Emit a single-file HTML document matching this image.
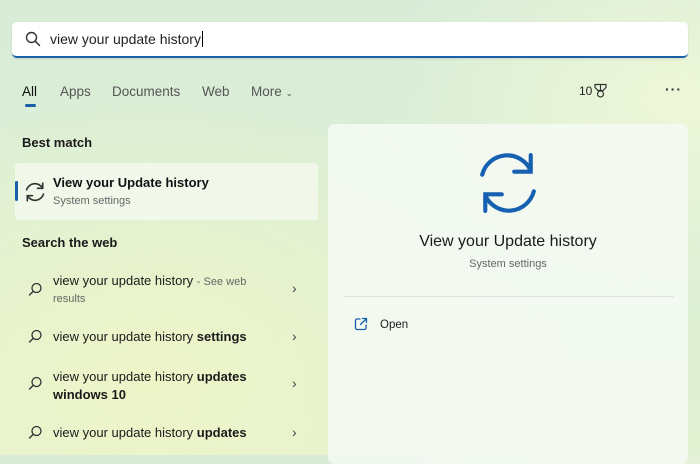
<!DOCTYPE html>
<html><head><meta charset="utf-8"><style>
*{margin:0;padding:0;box-sizing:border-box}
body{width:700px;height:455px;overflow:hidden;position:relative;font-family:"Segoe UI","Liberation Sans",sans-serif;color:#1a1a1a;
background:radial-gradient(ellipse 420px 300px at 150px 380px,#eef5c8 0%,rgba(238,245,200,0) 100%),radial-gradient(ellipse 300px 200px at 680px 100px,#eef7d8 0%,rgba(238,247,216,0) 100%),linear-gradient(180deg,#d8ecd8 0%,#dcefd6 50%,#e2f1d2 100%);}
.a{position:absolute;white-space:nowrap}
.search{left:12px;top:22px;width:676px;height:36px;background:#fff;border-radius:5px;border-bottom:2px solid #1a5fa8;box-shadow:0 1px 2px rgba(0,0,0,.1)}
.tab{top:84px;font-size:13.5px;color:#555}
.panel{left:328px;top:124px;width:360px;height:340px;background:rgba(246,250,244,.85);border-radius:7px}
.card{left:15px;top:163px;width:303px;height:57px;background:rgba(245,250,240,.8);border-radius:4px}
.h{font-size:13px;font-weight:bold}
.t{font-size:13px;color:#1a1a1a}
.s{font-size:11px;color:#666}
.chev{font-size:14px;color:#444}
</style></head><body>
<div class="a search"></div>
<svg class="a" style="left:25px;top:31px" width="16" height="16" viewBox="0 0 16 16"><circle cx="6.5" cy="6.5" r="5" fill="none" stroke="#333" stroke-width="1.4"/><path d="M10.2 10.2L14.5 14.5" stroke="#333" stroke-width="1.5" stroke-linecap="round"/></svg>
<div class="a" style="left:50px;top:31px;font-size:14px;color:#222">view your update history<span style="border-left:1px solid #000;margin-left:1px"></span></div>
<div class="a tab" style="left:22px;color:#111">All</div>
<div class="a" style="left:25px;top:104px;width:11px;height:3px;border-radius:2px;background:#1a5fa8"></div>
<div class="a tab" style="left:60px">Apps</div>
<div class="a tab" style="left:112px">Documents</div>
<div class="a tab" style="left:202px">Web</div>
<div class="a tab" style="left:251px">More <span style="font-size:9px">&#8964;</span></div>
<div class="a" style="left:579px;top:84px;font-size:12px;color:#222">10</div>
<svg class="a" style="left:593px;top:83px" width="15" height="16" viewBox="0 0 15 16"><path d="M2 1.5h11v3l-3 3h-5l-3-3z" fill="none" stroke="#333" stroke-width="1.2"/><path d="M7.5 1.5v6" stroke="#333" stroke-width="1.1"/><circle cx="7.5" cy="11" r="3" fill="none" stroke="#333" stroke-width="1.2"/></svg>
<div class="a" style="left:665px;top:81px;font-size:14px;color:#333;letter-spacing:1px;font-weight:bold">···</div>

<div class="a h" style="left:22px;top:135px">Best match</div>
<div class="a card"></div>
<div class="a" style="left:15px;top:181px;width:3px;height:20px;background:#1a5fa8;border-radius:2px"></div>
<svg class="a" style="left:24px;top:181px" width="22" height="22" viewBox="0 0 60 60"><path d="M7 24A24 24 0 0 1 51 20M51 6V20H37M53 36A24 24 0 0 1 9 40M9 54V40H23" fill="none" stroke="#333" stroke-width="4.5" stroke-linecap="round"/></svg>
<div class="a" style="left:53px;top:175px;font-size:13px;font-weight:600;color:#111">View your Update history</div>
<div class="a s" style="left:53px;top:195px">System settings</div>

<div class="a h" style="left:22px;top:235px">Search the web</div>
<div class="a t" style="left:53px;top:273px">view your update history <span class="s">- See web</span></div>
<div class="a s" style="left:53px;top:293px">results</div>
<div class="a t" style="left:53px;top:329px">view your update history <b>settings</b></div>
<div class="a t" style="left:53px;top:369px">view your update history <b>updates</b></div>
<div class="a t" style="left:53px;top:387px"><b>windows 10</b></div>
<div class="a t" style="left:53px;top:425px">view your update history <b>updates</b></div>
<svg class="a" style="left:28px;top:282px" width="15" height="15" viewBox="0 0 15 15"><circle cx="8.5" cy="6" r="4.5" fill="none" stroke="#333" stroke-width="1.3"/><path d="M5.3 9.2L1.5 13" stroke="#333" stroke-width="1.4" stroke-linecap="round"/></svg>
<svg class="a" style="left:28px;top:329px" width="15" height="15" viewBox="0 0 15 15"><circle cx="8.5" cy="6" r="4.5" fill="none" stroke="#333" stroke-width="1.3"/><path d="M5.3 9.2L1.5 13" stroke="#333" stroke-width="1.4" stroke-linecap="round"/></svg>
<svg class="a" style="left:28px;top:376px" width="15" height="15" viewBox="0 0 15 15"><circle cx="8.5" cy="6" r="4.5" fill="none" stroke="#333" stroke-width="1.3"/><path d="M5.3 9.2L1.5 13" stroke="#333" stroke-width="1.4" stroke-linecap="round"/></svg>
<svg class="a" style="left:28px;top:425px" width="15" height="15" viewBox="0 0 15 15"><circle cx="8.5" cy="6" r="4.5" fill="none" stroke="#333" stroke-width="1.3"/><path d="M5.3 9.2L1.5 13" stroke="#333" stroke-width="1.4" stroke-linecap="round"/></svg>
<div class="a chev" style="left:292px;top:280px">&#8250;</div>
<div class="a chev" style="left:292px;top:328px">&#8250;</div>
<div class="a chev" style="left:292px;top:375px">&#8250;</div>
<div class="a chev" style="left:292px;top:424px">&#8250;</div>

<div class="a panel"></div>
<svg class="a" style="left:477px;top:152px" width="62" height="62" viewBox="0 0 60 60"><path d="M5 22A25 25 0 0 1 52 18M52 3V19H36M55 38A25 25 0 0 1 8 42M8 57V41H24" fill="none" stroke="#1560b0" stroke-width="4" stroke-linecap="round"/></svg>
<div class="a" style="left:328px;width:360px;text-align:center;top:233px;font-size:16px;color:#1a1a1a">View your Update history</div>
<div class="a s" style="left:328px;width:360px;text-align:center;top:258px">System settings</div>
<div class="a" style="left:343px;top:296px;width:331px;height:1px;background:#dfe3dd"></div>
<svg class="a" style="left:354px;top:317px" width="14" height="14" viewBox="0 0 14 14"><path d="M6 2H3a1.5 1.5 0 0 0-1.5 1.5v7.5A1.5 1.5 0 0 0 3 12.5h7.5A1.5 1.5 0 0 0 12 11V8M8.5 1.5h4v4M12.5 1.5L6.5 7.5" fill="none" stroke="#1560b0" stroke-width="1.3" stroke-linecap="round"/></svg>
<div class="a" style="left:380px;top:319px;font-size:11.5px;color:#222">Open</div>
</body></html>
